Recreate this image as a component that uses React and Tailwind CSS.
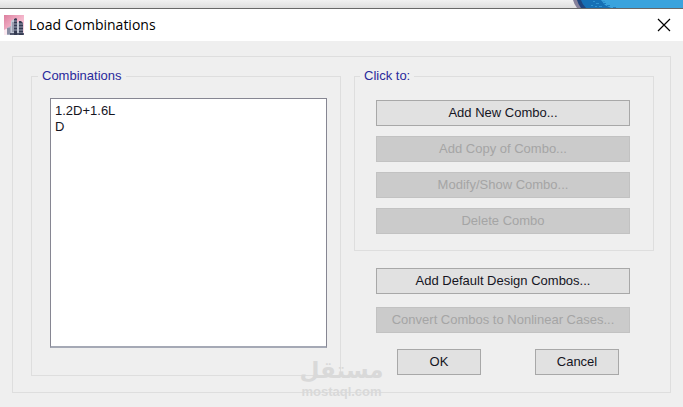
const combinations = ["1.2D+1.6L", "D"];

const comboActions = [
  { label: "Add New Combo...", disabled: false },
  { label: "Add Copy of Combo...", disabled: true },
  { label: "Modify/Show Combo...", disabled: true },
  { label: "Delete Combo", disabled: true },
];

function DialogButton({ children, disabled = false, className = "w-full" }) {
  return (
    <button
      type="button"
      disabled={disabled}
      className={`h-[26px] border border-[#a8a8a8] bg-[#e1e1e1] text-center leading-6 whitespace-nowrap text-[#15151f] disabled:border-[#c2c2c2] disabled:bg-[#cbcbcb] disabled:text-[#a5a5a5] ${className}`}
    >
      {children}
    </button>
  );
}

function AppIcon() {
  return (
    <svg viewBox="0 0 20 20" className="size-5 shrink-0" aria-hidden="true">
      <defs>
        <linearGradient id="sky" x1="0" y1="0" x2="1" y2="1">
          <stop offset="0" stopColor="#dc7f9e" />
          <stop offset="0.5" stopColor="#f3b3c9" />
          <stop offset="1" stopColor="#fbe6ef" />
        </linearGradient>
      </defs>
      <rect width="20" height="20" fill="url(#sky)" />
      <path d="M0 15 6 12v8H0z" fill="#fbe9f0" />
      <path d="M3 13 7 11v9H3z" fill="#a9aec0" />
      <path d="M7 6 10 4v16H7z" fill="#c3c9d6" />
      <path d="M10 4 12 3l1 1v16h-3z" fill="#353b52" />
      <path d="M13 8 15 6v14h-2z" fill="#c3c9d6" />
      <path d="M15 6h2l2 2v12h-4z" fill="#353b52" />
      <path d="M3 14h3M3 16h3M3 18h3M8 8h2M8 10h2M8 12h2M8 14h2M8 16h2" stroke="#5b6178" strokeWidth="0.8" />
      <path d="M10 6h3M10 9h3M10 12h3M10 15h3M15 9h4M15 12h4M15 15h4M15 18h4" stroke="#a6aec2" strokeWidth="0.9" />
      <path d="M6 19h14" stroke="#353b52" strokeWidth="1.6" />
    </svg>
  );
}

function Backdrop() {
  return (
    <div className="flex h-[9px] justify-end border-b border-[#686868] bg-linear-to-b from-[#f1f1f1] to-[#dedede]">
      <svg viewBox="0 0 112 8" className="h-2 w-28" aria-hidden="true">
        <path d="M2 0h6l4 8H6Q3 4 2 0z" fill="#85809a" />
        <path d="M6 0h106v8H10Q7 4 6 0z" fill="#20457e" />
        <path d="M10 0h102v8H15Q11 4 10 0z" fill="#1670b5" />
        <path d="M30 0h82v8H40l-6-3z" fill="#3aa3dd" />
        <path d="M22 1h2v1h-2zM25 3h3v1h-3zM20 5h2v1h-2zM28 6h3v1h-3zM31 1h3v1h-3zM24 6h2v1h-2z" fill="#2f93d0" />
        <path d="M36 5h3v1h-3zM42 7h3v1h-3zM33 3h2v1h-2z" fill="#1c7cc0" />
      </svg>
    </div>
  );
}

function Watermark() {
  return (
    <div className="pointer-events-none absolute bottom-[7px] left-1/2 flex -translate-x-1/2 flex-col items-center font-bold text-[#d9d9d9]">
      <span lang="ar" dir="rtl" className="font-['DejaVu_Sans',sans-serif] text-[23px] leading-7">
        مستقل
      </span>
      <span className="text-[13px] leading-4">mostaql.com</span>
    </div>
  );
}

export default function App() {
  return (
    <div className="relative min-h-screen bg-[#efefef] font-['Liberation_Sans',Arial,sans-serif] text-[13px]">
      <Backdrop />
      <header className="flex h-8 items-center bg-white pr-[11px] pl-1">
        <AppIcon />
        <h1 className="ml-[5px] flex-1 font-['Open_Sans','Noto_Sans',sans-serif] text-[14px] leading-8 text-black">
          Load Combinations
        </h1>
        <button type="button" aria-label="Close" className="flex size-4 items-center justify-center">
          <svg viewBox="0 0 14 14" className="size-[14px]" aria-hidden="true">
            <path d="M1 1l12 12M13 1L1 13" stroke="#000" strokeWidth="1.2" fill="none" />
          </svg>
        </button>
      </header>

      <main className="px-3 pt-[15px] pb-[13px]">
        <div className="grid grid-cols-[310fr_300fr] gap-x-[13px] border border-[#dedede] pt-[11px] pr-4 pb-4 pl-[18px]">
          <fieldset className="min-w-0 border border-[#dedede] pt-[14px] pr-[13px] pb-[27px] pl-[18px]">
            <legend className="-ml-3 px-1 leading-4 text-[#2a2a9c]">
              <label htmlFor="combinations">Combinations</label>
            </legend>
            <select
              id="combinations"
              multiple
              size={2}
              className="block h-[250px] w-full appearance-none overflow-hidden rounded-none border border-b-2 border-[#868692] border-b-[#a5a9b5] bg-white py-1 pl-1 text-[#15151f] outline-none"
            >
              {combinations.map((name) => (
                <option key={name} className="h-4 min-h-0 p-0">
                  {name}
                </option>
              ))}
            </select>
          </fieldset>

          <div className="min-w-0">
            <fieldset className="min-w-0 border border-[#dedede] pt-4 pr-[23px] pb-4 pl-[21px]">
              <legend className="-ml-4 px-1 leading-4 text-[#2a2a9c]">Click to:</legend>
              <div className="flex flex-col gap-[10px]">
                {comboActions.map(({ label, disabled }) => (
                  <DialogButton key={label} disabled={disabled}>
                    {label}
                  </DialogButton>
                ))}
              </div>
            </fieldset>

            <div className="mt-[17px] mr-6 ml-[22px] flex flex-col gap-[13px]">
              <DialogButton>Add Default Design Combos...</DialogButton>
              <DialogButton disabled>Convert Combos to Nonlinear Cases...</DialogButton>
            </div>

            <div className="mt-4 mr-[35px] ml-[43px] flex justify-between">
              <DialogButton className="w-[84px]">OK</DialogButton>
              <DialogButton className="w-[84px]">Cancel</DialogButton>
            </div>
          </div>
        </div>
      </main>
      <Watermark />
    </div>
  );
}
